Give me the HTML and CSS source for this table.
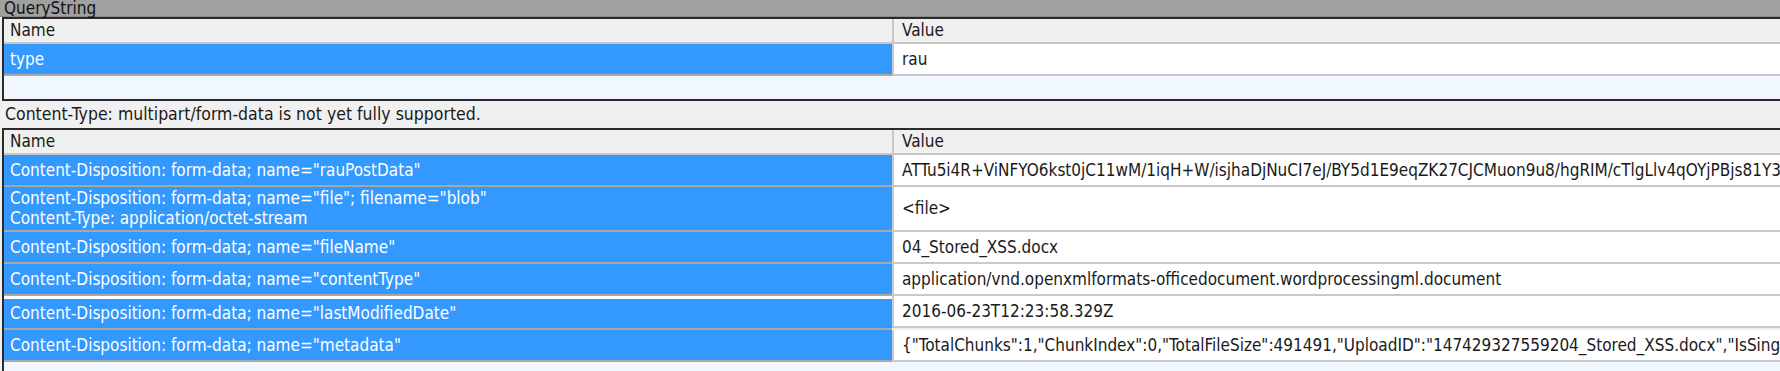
FILE: index.html
```html
<!DOCTYPE html>
<html lang="en">
<head>
  <meta charset="UTF-8">
  <title>QueryString</title>
  <link rel="stylesheet" href="styles.css">
</head>
<body>

<div class="title-bar">QueryString</div>

<div class="grid grid-query">
  <div class="head">Name</div>
  <div class="head head-value">Value</div>

  <div class="name">type</div>
  <div class="value">rau</div>

  <div class="filler"></div>
</div>

<div class="note">Content-Type: multipart/form-data is not yet fully supported.</div>

<div class="grid grid-form">
  <div class="head">Name</div>
  <div class="head head-value">Value</div>

  <div class="name">Content-Disposition: form-data; name="rauPostData"</div>
  <div class="value">ATTu5i4R+ViNFYO6kst0jC11wM/1iqH+W/isjhaDjNuCI7eJ/BY5d1E9eqZK27CJCMuon9u8/hgRIM/cTlgLlv4qOYjPBjs81Y3c</div>

  <div class="name tall">Content-Disposition: form-data; name="file"; filename="blob"<br>Content-Type: application/octet-stream</div>
  <div class="value tall">&lt;file&gt;</div>

  <div class="name">Content-Disposition: form-data; name="fileName"</div>
  <div class="value">04_Stored_XSS.docx</div>

  <div class="name">Content-Disposition: form-data; name="contentType"</div>
  <div class="value">application/vnd.openxmlformats-officedocument.wordprocessingml.document</div>

  <div class="name split">Content-Disposition: form-data; name="lastModifiedDate"</div>
  <div class="value">2016-06-23T12:23:58.329Z</div>

  <div class="name">Content-Disposition: form-data; name="metadata"</div>
  <div class="value">{"TotalChunks":1,"ChunkIndex":0,"TotalFileSize":491491,"UploadID":"147429327559204_Stored_XSS.docx","IsSingleChunk":true}</div>

  <div class="filler"></div>
</div>

</body>
</html>
```

FILE: styles.css
```css
* { margin: 0; padding: 0; box-sizing: border-box; }
html, body { height: 100%; overflow: hidden; }
body {
  background: #f0f0f0;
  font-family: "DejaVu Sans Condensed", "DejaVu Sans", sans-serif;
  font-size: 17px;
  color: #1a1a1a;
  white-space: nowrap;
}

.title-bar {
  height: 17px;
  line-height: 17px;
  padding-left: 4px;
  background: #a0a0a0;
  color: #111;
  border-bottom: 1px solid #8a8a8a;
}

.grid {
  display: grid;
  grid-template-columns: 888px 1fr;
  margin-left: 2px;
  border: 2px solid #2a2a2a;
  border-right: none;
  border-bottom: 2px solid #2a2a2a;
  overflow: hidden;
}

.head {
  height: 25px;
  line-height: 23px;
  padding-left: 6px;
  background: #f0f0f0;
  border-bottom: 2px solid #c8c8c8;
}
.head-value { border-left: 2px solid #c8c8c8; padding-left: 8px; }

.name, .value {
  height: 32px;
  line-height: 30px;
  padding-left: 6px;
  border-bottom: 2px solid #a8a8a8;
  overflow: hidden;
}
.name { background: #3399ff; color: #fff; }
.value { background: #fff; border-left: 2px solid #c8c8c8; padding-left: 8px; border-bottom-color: #c8c8c8; }

.tall { height: 45px; }
.name.tall { line-height: 20px; padding-top: 1px; }
.value.tall { line-height: 43px; }

.name.split { border-top: 3px solid #fff; height: 34px; line-height: 29px; }

.filler { grid-column: 1 / -1; background: #f0f7ff; }
.grid-query .filler { height: 23px; }
.grid-form .filler { height: 20px; }

.note {
  height: 27px;
  line-height: 27px;
  padding-left: 5px;
  font-size: 17.5px;
  color: #1a1a1a;
}
```
